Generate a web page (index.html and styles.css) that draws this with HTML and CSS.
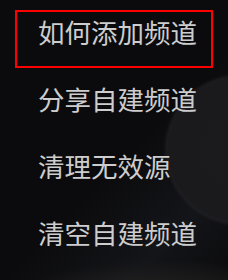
FILE: index.html
```html
<!DOCTYPE html>
<html lang="zh-CN">
<head>
    <meta charset="UTF-8">
    <meta name="viewport" content="width=device-width, initial-scale=1.0">
    <title>频道菜单</title>
    <link rel="stylesheet" href="styles.css">
</head>
<body>
    <ul class="menu">
        <li class="menu-item focused">如何添加频道</li>
        <li class="menu-item">分享自建频道</li>
        <li class="menu-item">清理无效源</li>
        <li class="menu-item">清空自建频道</li>
    </ul>
</body>
</html>
```

FILE: styles.css
```css
* {
    box-sizing: border-box;
    margin: 0;
    padding: 0;
}

html, body {
    width: 228px;
    height: 280px;
    overflow: hidden;
}

body {
    font-family: "Noto Sans CJK SC", "Noto Sans", sans-serif;
    background-color: #0b0b0d;
    background-image:
        radial-gradient(circle at 240px 150px, #1b1b1e 0, #1a1a1d 71px, rgba(34, 34, 38, 0.7) 73px, rgba(20, 20, 23, 0) 77px),
        radial-gradient(ellipse 150px 36px at 170px 296px, #262422 0, rgba(30, 29, 28, 0) 100%),
        linear-gradient(135deg, rgba(0, 0, 0, 0) 55%, rgba(22, 23, 28, 0.8) 80%, rgba(12, 12, 14, 0) 100%);
}

.menu {
    list-style: none;
    padding: 10px 0 0 15px;
    width: 213px;
    display: flex;
    flex-direction: column;
    gap: 9px;
}

.menu-item {
    height: 58px;
    padding: 5px 0 0 21px;
    border: 2px solid transparent;
    color: #cdcdcd;
    font-size: 26.5px;
    line-height: 30px;
    white-space: nowrap;
}

.menu-item.focused {
    border-color: #ff0000;
}
```
